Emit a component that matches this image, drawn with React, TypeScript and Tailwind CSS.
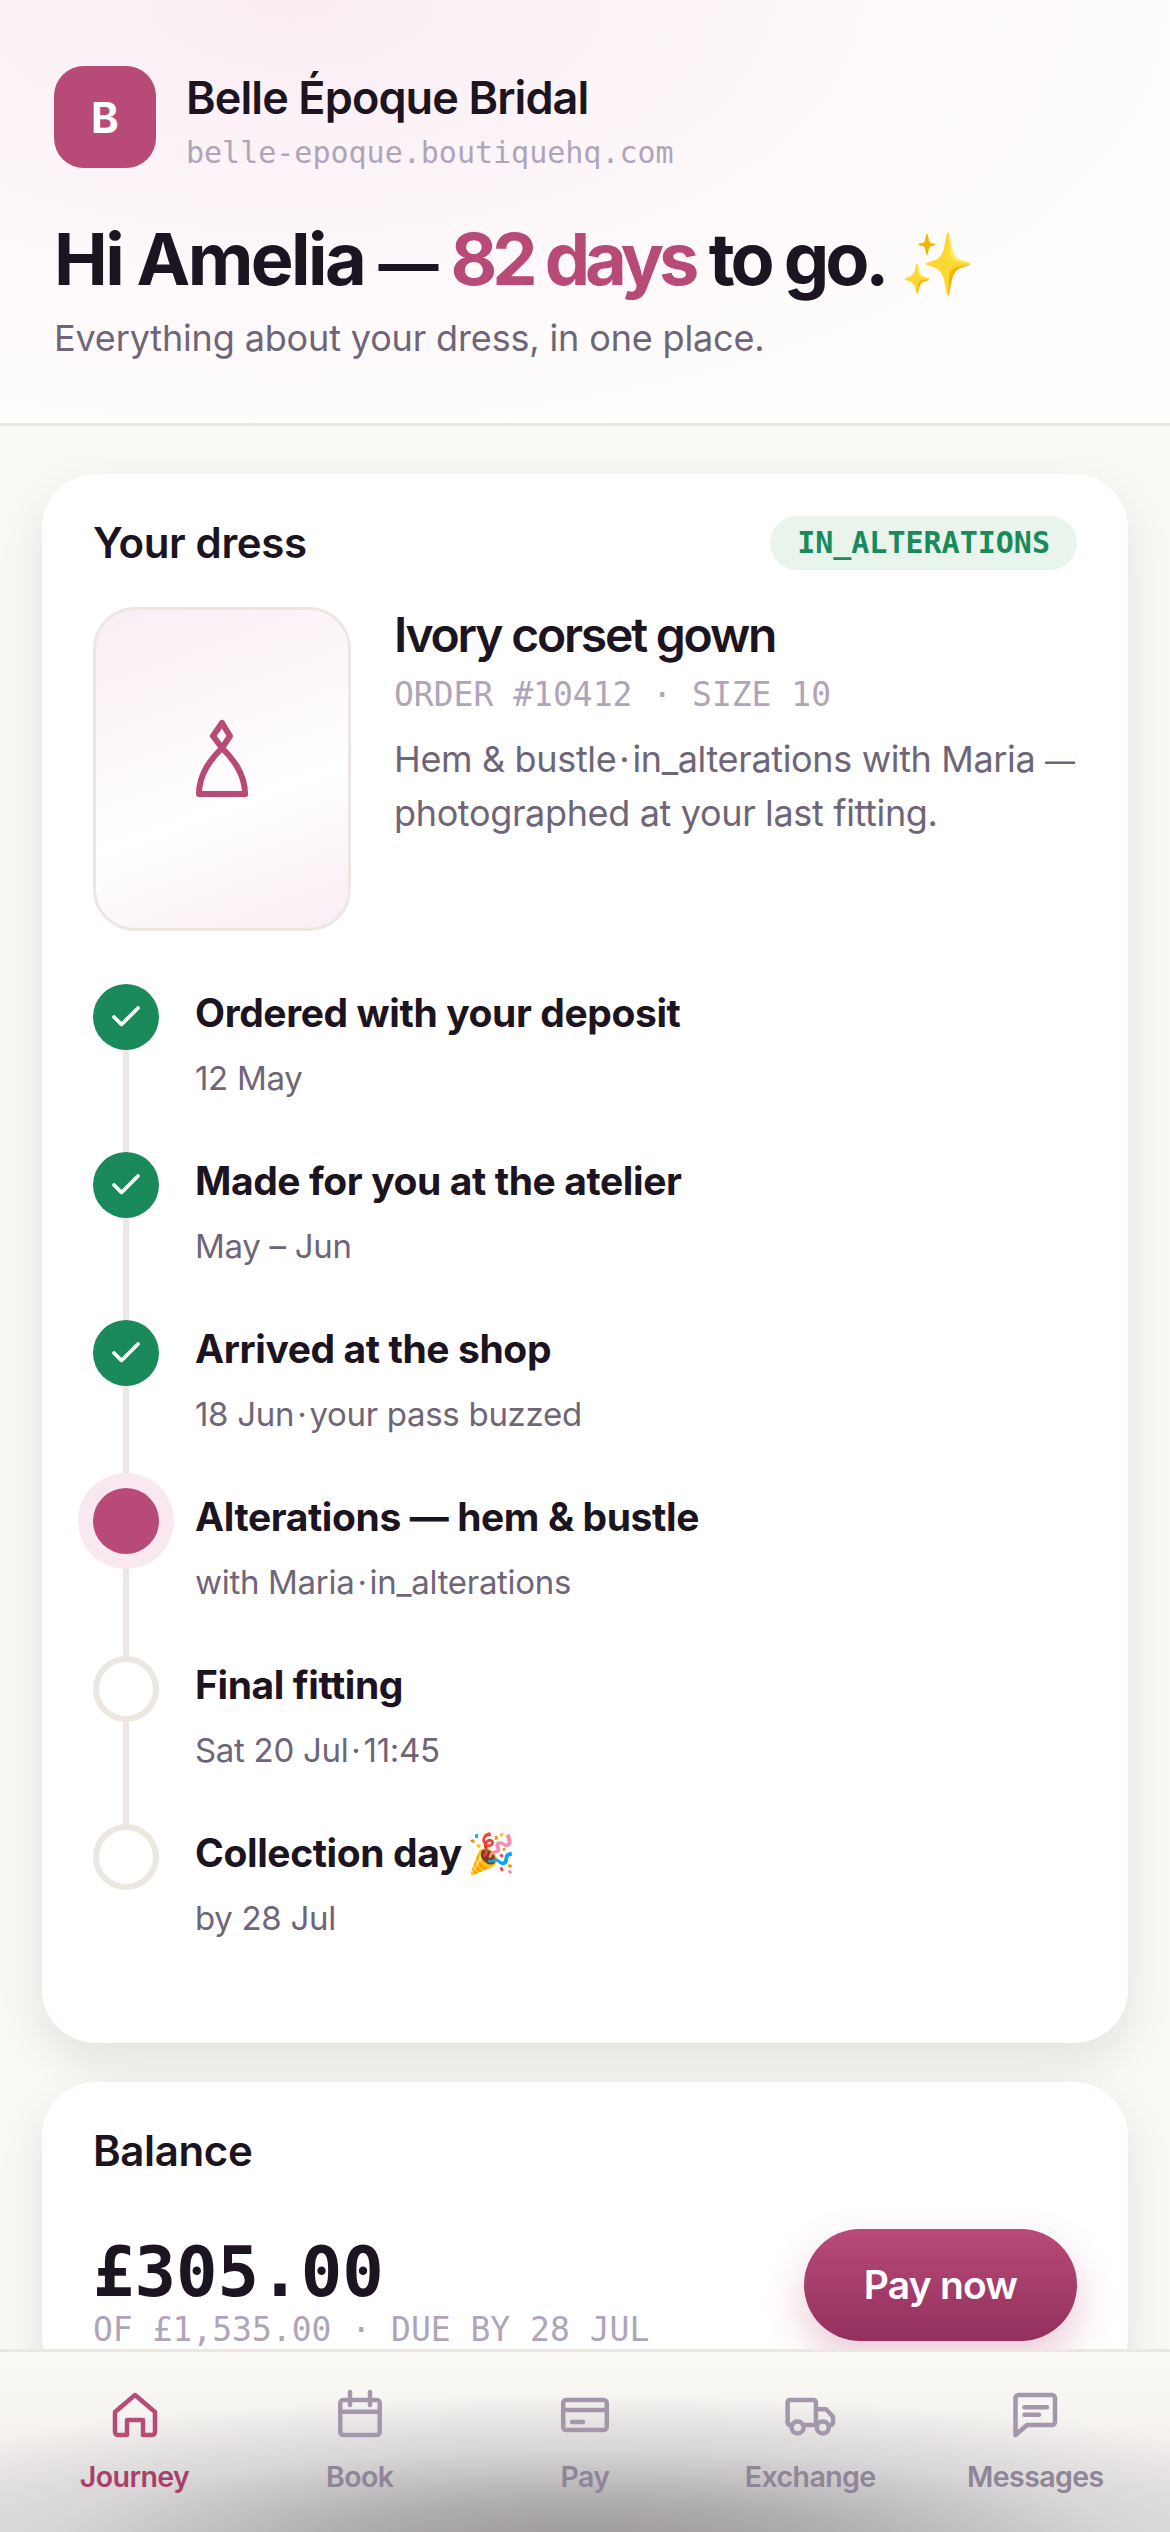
import { Check } from "lucide-react";

const sans = "font-['Inter','Noto_Sans',sans-serif]";
const mono = "font-['DejaVu_Sans_Mono','Liberation_Mono',monospace]";

const steps = [
  { title: "Ordered with your deposit", sub: ["12 May"], state: "done" },
  { title: "Made for you at the atelier", sub: ["May – Jun"], state: "done" },
  { title: "Arrived at the shop", sub: ["18 Jun", "your pass buzzed"], state: "done" },
  { title: "Alterations — hem & bustle", sub: ["with Maria", "in_alterations"], state: "now" },
  { title: "Final fitting", sub: ["Sat 20 Jul", "11:45"], state: "next" },
  { title: "Collection day", emoji: "🎉", sub: ["by 28 Jul"], state: "next" },
];

function HomeIcon() {
  return (
    <svg width="54" height="54" viewBox="0 0 54 54" fill="none" stroke="currentColor" strokeWidth="4.5" strokeLinejoin="round">
      <path d="M27 7 L47 24 V44 a3 3 0 0 1 -3 3 H35 V32 H19 V47 H10 a3 3 0 0 1 -3 -3 V24 Z" />
    </svg>
  );
}

function CalendarIcon() {
  return (
    <svg width="54" height="54" viewBox="0 0 54 54" fill="none" stroke="currentColor" strokeWidth="4.5" strokeLinecap="round">
      <rect x="7.3" y="12" width="39.4" height="35" rx="3" />
      <path d="M17 4 V17 M37 4 V17 M7.3 23.7 H46.7" />
    </svg>
  );
}

function CardIcon() {
  return (
    <svg width="54" height="54" viewBox="0 0 54 54" fill="none" stroke="currentColor" strokeWidth="4.5" strokeLinecap="round">
      <rect x="5.2" y="12" width="43.6" height="30" rx="3" />
      <path d="M5.2 22 H48.8 M14 34 H25" />
    </svg>
  );
}

function TruckIcon() {
  return (
    <svg width="54" height="54" viewBox="0 0 54 54" fill="none" stroke="currentColor" strokeWidth="4.5" strokeLinejoin="round" strokeLinecap="round">
      <path d="M9 37 H7 a2.4 2.4 0 0 1 -2.4 -2.4 V14.4 a2.4 2.4 0 0 1 2.4 -2.4 H30.5 a2.4 2.4 0 0 1 2.4 2.4 V37" />
      <path d="M33 21.3 H43 L50 28.7 V34.6 a2.4 2.4 0 0 1 -2.4 2.4 H46 M21 37 H34" />
      <circle cx="14.6" cy="39.5" r="6" />
      <circle cx="39.8" cy="39.5" r="6" />
    </svg>
  );
}

function MessageIcon() {
  return (
    <svg width="54" height="54" viewBox="0 0 54 54" fill="none" stroke="currentColor" strokeWidth="4.5" strokeLinejoin="round" strokeLinecap="round">
      <path d="M7.5 47 V10 a3 3 0 0 1 3 -3 H44 a3 3 0 0 1 3 3 V34 a3 3 0 0 1 -3 3 H19 Z" />
      <path d="M16.5 19.3 H39 M16.5 26.7 H31" />
    </svg>
  );
}

const tabs = [
  { label: "Journey", Icon: HomeIcon, active: true },
  { label: "Book", Icon: CalendarIcon, active: false },
  { label: "Pay", Icon: CardIcon, active: false },
  { label: "Exchange", Icon: TruckIcon, active: false },
  { label: "Messages", Icon: MessageIcon, active: false },
];

function Dot({ state }: { state: string }) {
  if (state === "done") {
    return (
      <div className="w-[66px] h-[66px] rounded-full bg-[#1b8a5a] flex items-center justify-center">
        <Check size={36} color="white" strokeWidth={2.5} />
      </div>
    );
  }
  if (state === "now") {
    return <div className="w-[66px] h-[66px] rounded-full bg-[#b84a78] ring-[15px] ring-[#f9e8f0]" />;
  }
  return <div className="w-[66px] h-[66px] rounded-full bg-white border-[6px] border-[#ece8e1]" />;
}

export default function App() {
  return (
    <div className={`relative h-[2532px] overflow-hidden bg-[#faf9f5] text-[#1c1420] ${sans}`}>
      <header className="h-[426px] px-[54px] pt-[66px] border-b-[3px] border-[#ece8e1] bg-[radial-gradient(ellipse_at_25%_0%,#f9ecf3_0%,#fdf8fa_45%,#fffdfc_75%)]">
        <div className="flex items-start gap-[30px]">
          <div className="w-[102px] h-[102px] rounded-[30px] bg-[#b84a78] flex items-center justify-center text-white text-[42px] font-bold">B</div>
          <div className="pt-[5px]">
            <div className="text-[45px] leading-[54px] font-semibold tracking-[-0.02em]">Belle Époque Bridal</div>
            <div className={`mt-[8px] text-[30px] leading-[40px] text-[#afa4b8] ${mono}`}>belle-epoque.boutiquehq.com</div>
          </div>
        </div>
        <h1 className="mt-[43px] h-[86px] text-[72px] leading-[86px] font-bold tracking-[-2.6px]">
          Hi Amelia <span className="text-[60px]">—</span> <span className="text-[#b84a78] tracking-[-5px]">82 days</span> <span className="tracking-[-4px]">to go.</span> <span className="text-[60px] tracking-normal">✨</span>
        </h1>
        <p className="mt-[9px] text-[36px] leading-[54px] tracking-[-0.15px] text-[#6f6578]">Everything about your dress, in one place.</p>
      </header>

      <main className="px-[42px] pt-[48px] flex flex-col gap-[39px]">
        <section className="h-[1569px] rounded-[54px] bg-white shadow-[0_18px_48px_rgba(28,20,32,0.1)] pt-[37px] px-[51px]">
          <div className="flex items-center justify-between">
            <h2 className="text-[42px] font-semibold tracking-[-0.35px]">Your dress</h2>
            <span className={`h-[54px] px-[27px] rounded-full bg-[#e8f4ec] text-[#1b8a5a] text-[30px] font-bold leading-[54px] ${mono}`}>IN_ALTERATIONS</span>
          </div>
          <div className="mt-[33px] flex gap-[43px]">
            <div className="w-[258px] h-[324px] shrink-0 rounded-[42px] border-[3px] border-[#ece8e1] bg-[linear-gradient(160deg,#f9edf3,#ffffff_60%,#f9edf3)] flex items-center justify-center">
              <svg className="mb-[22px]" width="55" height="80" viewBox="15 15 55 80" fill="none" stroke="#b84a78" strokeWidth="6" strokeLinejoin="round" strokeLinecap="round">
                <path d="M42 20 L33 33 L42 45 C52 55 65 70 65 91" />
                <path d="M42 20 L50 33 L42 45 C32 55 19 70 19 91 H65" />
              </svg>
            </div>
            <div className="-mr-[30px]">
              <div className="text-[48px] leading-[56px] font-semibold tracking-[-2.2px]">Ivory corset gown</div>
              <div className={`mt-[9px] text-[33px] leading-[46px] text-[#afa4b8] ${mono}`}>ORDER #10412 · SIZE 10</div>
              <p className="mt-[15px] text-[36px] leading-[52px] tracking-[-0.35px] text-[#6f6578]">
                Hem &amp; bustle<span className="mx-[3px]">·</span>in_alterations with Maria <span className="text-[30px]">—</span><br />photographed at your last fitting.
              </p>
            </div>
          </div>
          <ol className="mt-[53px]">
            {steps.map((step, i) => (
              <li key={step.title} className="relative flex gap-[36px] h-[168px]">
                {i < steps.length - 1 && <div className="absolute left-[30px] top-[60px] w-[6px] h-[110px] bg-[#ece8e1]" />}
                <div className="relative"><Dot state={step.state} /></div>
                <div className="pt-[2px]">
                  <div className="h-[54px] text-[39px] leading-[54px] font-bold tracking-[-0.4px]">
                    {step.title}
                    {step.emoji && <span className="ml-[5px]">{step.emoji}</span>}
                  </div>
                  <div className="mt-[16px] text-[33px] leading-[44px] tracking-[-0.3px] text-[#6f6578]">
                    {step.sub[0]}
                    {step.sub[1] && <><span className="mx-[3px]">·</span>{step.sub[1]}</>}
                  </div>
                </div>
              </li>
            ))}
          </ol>
        </section>

        <section className="rounded-[54px] bg-white shadow-[0_18px_48px_rgba(28,20,32,0.1)] pt-[37px] px-[51px] pb-[40px]">
          <h2 className="text-[42px] font-semibold tracking-[-0.35px]">Balance</h2>
          <div className="mt-[47px] flex items-end justify-between">
            <div>
              <div className={`text-[69px] leading-[76px] font-bold ${mono}`}>£305.00</div>
              <div className={`text-[33px] leading-[40px] text-[#afa4b8] ${mono}`}>OF £1,535.00 · DUE BY 28 JUL</div>
            </div>
            <button className="mb-[9px] w-[273px] h-[112px] rounded-full bg-[linear-gradient(180deg,#b84a78,#93305d)] text-white text-[39px] font-semibold tracking-[-0.02em] shadow-[0_18px_42px_rgba(184,74,120,0.3)]">Pay now</button>
          </div>
        </section>
      </main>

      <nav className="absolute inset-x-0 bottom-0 h-[183px] px-[22px] grid grid-cols-5 border-t-[3px] border-[#ece8e1] bg-[radial-gradient(ellipse_72%_85%_at_50%_108%,#9a9698_0%,#b0adae_30%,#d9d7d7_65%,transparent_100%),linear-gradient(180deg,#fbfaf6,#f3f0ee_55%,#e8e6e2)]">
        {tabs.map(({ label, Icon, active }) => (
          <div key={label} className="flex flex-col items-center pt-[36px]">
            <span className={active ? "text-[#b84a78]" : "text-[#a497ab]"}><Icon /></span>
            <span className={`mt-[15px] text-[28.5px] leading-[40px] font-semibold tracking-[-0.02em] ${active ? "text-[#a83f6c]" : "text-[#8f8498]"}`}>{label}</span>
          </div>
        ))}
      </nav>
    </div>
  );
}
